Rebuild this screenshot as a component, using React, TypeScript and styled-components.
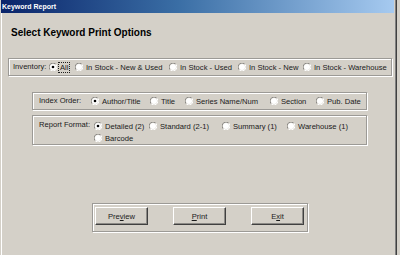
import React from "react";
import styled, { createGlobalStyle } from "styled-components";

const GlobalStyle = createGlobalStyle`
  html, body { margin: 0; padding: 0; background: #d4d0c8; }
  body { font-family: "Liberation Sans", Arial, sans-serif; }
`;

const Window = styled.div`
  width: 397px;
  height: 255px;
  box-sizing: border-box;
  background: #d4d0c8;
  box-shadow: inset 1px 0 #d4d0c8, inset 2px 0 #ffffff, inset -1px 0 #404040,
    inset -2px 0 #808080;
  display: flex;
  flex-direction: column;
  overflow: hidden;
`;

const TitleBar = styled.div`
  height: 13px;
  margin: 0 3px 0 1px;
  background: linear-gradient(to right, #0a246a, #3a6ea5 45%, #a6caf0);
  color: #ffffff;
  font-weight: bold;
  font-size: 7px;
  line-height: 13px;
  padding-left: 1px;
  white-space: nowrap;
`;

const Content = styled.div`
  display: flex;
  flex-direction: column;
  align-items: flex-start;
`;

const Heading = styled.div`
  margin: 14px 0 0 11px;
  font-size: 10px;
  line-height: 12px;
  font-weight: bold;
  color: #000;
  white-space: nowrap;
`;

const GroupBox = styled.div<{ $mt: number; $ml: number; $w: number; $h: number }>`
  margin-top: ${(p) => p.$mt}px;
  margin-left: ${(p) => p.$ml}px;
  width: ${(p) => p.$w}px;
  height: ${(p) => p.$h}px;
  box-sizing: border-box;
  border: 1px solid #9c9a96;
  box-shadow: inset 1px 1px 0 #ffffff, 1px 1px 0 #ffffff;
  display: flex;
  align-items: flex-start;
`;

const FieldLabel = styled.div<{ $w: number; $pl: number; $h: number }>`
  width: ${(p) => p.$w}px;
  padding-left: ${(p) => p.$pl}px;
  height: ${(p) => p.$h}px;
  line-height: ${(p) => p.$h}px;
  font-size: 7.6px;
  color: #1a1a1a;
  white-space: nowrap;
  flex: none;
`;

const OptionGrid = styled.div<{ $cols: string; $pt: number }>`
  display: grid;
  grid-template-columns: ${(p) => p.$cols};
  grid-auto-rows: 12px;
  padding-top: ${(p) => p.$pt}px;
`;

const Option = styled.label`
  display: flex;
  align-items: center;
  gap: 3px;
  font-size: 7.6px;
  color: #1a1a1a;
  white-space: nowrap;
  height: 12px;
`;

const OptionText = styled.span<{ $focused?: boolean }>`
  line-height: 9px;
  padding: 0 1px;
  margin-left: -1px;
  outline: ${(p) => (p.$focused ? "1px dotted #202020" : "none")};
`;

const RadioSvg = styled.svg`
  width: 8px;
  height: 8px;
  flex: none;
`;

const Radio = ({ checked }: { checked?: boolean }) => (
  <RadioSvg viewBox="0 0 8 8">
    <path d="M1.2 6.8 A3.6 3.6 0 0 1 6.8 1.2" fill="none" stroke="#8a8884" strokeWidth="1" />
    <path d="M6.8 1.2 A3.6 3.6 0 0 1 1.2 6.8" fill="none" stroke="#ffffff" strokeWidth="1" />
    <circle cx="4" cy="4" r="3" fill="#ffffff" />
    {checked && <circle cx="4" cy="4" r="1.3" fill="#000000" />}
  </RadioSvg>
);

const ButtonRow = styled.div`
  display: flex;
  gap: 25px;
  padding: 3px 0 0 2px;
`;

const PushButton = styled.button`
  width: 53px;
  height: 18px;
  box-sizing: border-box;
  padding: 0;
  background: #d4d0c8;
  border: 1px solid;
  border-color: #ffffff #404040 #404040 #ffffff;
  box-shadow: inset -1px -1px 0 #8c8a86;
  font-family: "Liberation Sans", Arial, sans-serif;
  font-size: 7.6px;
  color: #1a1a1a;
  u { text-decoration: underline; text-underline-offset: 1px; }
`;

type Opt = { label: string; checked?: boolean; focused?: boolean };

const inventory: Opt[] = [
  { label: "All", checked: true, focused: true },
  { label: "In Stock - New & Used" },
  { label: "In Stock - Used" },
  { label: "In Stock - New" },
  { label: "In Stock - Warehouse" },
];

const indexOrder: Opt[] = [
  { label: "Author/Title", checked: true },
  { label: "Title" },
  { label: "Series Name/Num" },
  { label: "Section" },
  { label: "Pub. Date" },
];

const reportFormat: Opt[] = [
  { label: "Detailed (2)", checked: true },
  { label: "Standard (2-1)" },
  { label: "Summary (1)" },
  { label: "Warehouse (1)" },
  { label: "Barcode" },
];

const Options = ({ items }: { items: Opt[] }) => (
  <>
    {items.map((o) => (
      <Option key={o.label}>
        <Radio checked={o.checked} />
        <OptionText $focused={o.focused}>{o.label}</OptionText>
      </Option>
    ))}
  </>
);

export default function App() {
  return (
    <>
      <GlobalStyle />
      <Window>
        <TitleBar>Keyword Report</TitleBar>
        <Content>
          <Heading>Select Keyword Print Options</Heading>

          <GroupBox $mt={19} $ml={8} $w={384} $h={18}>
            <FieldLabel $w={36} $pl={4} $h={16}>Inventory:</FieldLabel>
            <OptionGrid $cols="26px 94px 69px 65px auto" $pt={2}>
              <Options items={inventory} />
            </OptionGrid>
          </GroupBox>

          <GroupBox $mt={16} $ml={32} $w={335} $h={18}>
            <FieldLabel $w={52} $pl={6} $h={16}>Index Order:</FieldLabel>
            <OptionGrid $cols="59px 35px 85px 46px auto" $pt={2}>
              <Options items={indexOrder} />
            </OptionGrid>
          </GroupBox>

          <GroupBox $mt={5} $ml={32} $w={335} $h={30}>
            <FieldLabel $w={55} $pl={6} $h={18}>Report Format:</FieldLabel>
            <OptionGrid $cols="55px 73px 65px auto" $pt={4}>
              <Options items={reportFormat} />
            </OptionGrid>
          </GroupBox>

          <GroupBox $mt={58} $ml={92} $w={216} $h={29}>
            <ButtonRow>
              <PushButton>Pre<u>v</u>iew</PushButton>
              <PushButton><u>P</u>rint</PushButton>
              <PushButton>E<u>x</u>it</PushButton>
            </ButtonRow>
          </GroupBox>
        </Content>
      </Window>
    </>
  );
}
